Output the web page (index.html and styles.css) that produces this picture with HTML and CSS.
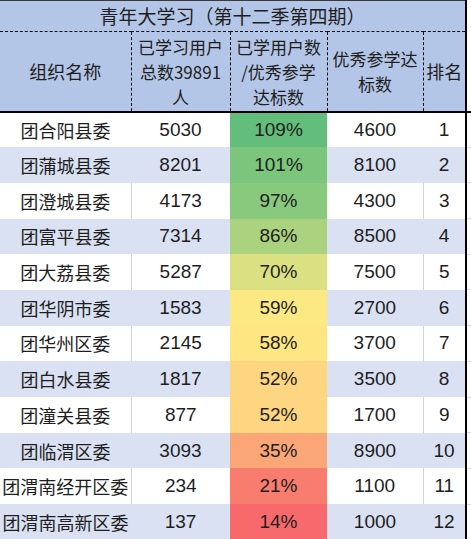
FILE: index.html
```html
<!DOCTYPE html>
<html lang="zh-CN">
<head>
  <meta charset="UTF-8" />
  <meta name="viewport" content="width=device-width, initial-scale=1.0" />
  <title>青年大学习（第十二季第四期）</title>
  <link rel="stylesheet" href="styles.css">
</head>
<body>

  <table class="tabla">
    <colgroup>
      <col class="col_nombre">
      <col class="col_total">
      <col class="col_tasa">
      <col class="col_meta">
      <col class="col_rango">
      <col class="col_hueco">
    </colgroup>
    <thead>
      <tr class="fila_titulo">
        <th colspan="5">青年大学习（第十二季第四期）</th>
        <td class="hueco"></td>
      </tr>
      <tr class="fila_cabecera">
        <th>组织名称</th>
        <th>已学习用户<br>总数39891<br>人</th>
        <th>已学用户数<br>/优秀参学<br>达标数</th>
        <th>优秀参学达<br>标数</th>
        <th>排名</th>
        <td class="hueco"></td>
      </tr>
    </thead>
    <tbody>
      <tr>
        <td class="nombre">团合阳县委</td>
        <td class="num">5030</td>
        <td class="num tasa" style="background:#63be7b">109%</td>
        <td class="num">4600</td>
        <td class="num">1</td>
        <td class="hueco"></td>
      </tr>
      <tr>
        <td class="nombre">团蒲城县委</td>
        <td class="num">8201</td>
        <td class="num tasa" style="background:#7cc57c">101%</td>
        <td class="num">8100</td>
        <td class="num">2</td>
        <td class="hueco"></td>
      </tr>
      <tr>
        <td class="nombre">团澄城县委</td>
        <td class="num">4173</td>
        <td class="num tasa" style="background:#88c97d">97%</td>
        <td class="num">4300</td>
        <td class="num">3</td>
        <td class="hueco"></td>
      </tr>
      <tr>
        <td class="nombre">团富平县委</td>
        <td class="num">7314</td>
        <td class="num tasa" style="background:#aad27f">86%</td>
        <td class="num">8500</td>
        <td class="num">4</td>
        <td class="hueco"></td>
      </tr>
      <tr>
        <td class="nombre">团大荔县委</td>
        <td class="num">5287</td>
        <td class="num tasa" style="background:#dbe182">70%</td>
        <td class="num">7500</td>
        <td class="num">5</td>
        <td class="hueco"></td>
      </tr>
      <tr>
        <td class="nombre">团华阴市委</td>
        <td class="num">1583</td>
        <td class="num tasa" style="background:#fde984">59%</td>
        <td class="num">2700</td>
        <td class="num">6</td>
        <td class="hueco"></td>
      </tr>
      <tr>
        <td class="nombre">团华州区委</td>
        <td class="num">2145</td>
        <td class="num tasa" style="background:#fee683">58%</td>
        <td class="num">3700</td>
        <td class="num">7</td>
        <td class="hueco"></td>
      </tr>
      <tr>
        <td class="nombre">团白水县委</td>
        <td class="num">1817</td>
        <td class="num tasa" style="background:#fed580">52%</td>
        <td class="num">3500</td>
        <td class="num">8</td>
        <td class="hueco"></td>
      </tr>
      <tr>
        <td class="nombre">团潼关县委</td>
        <td class="num">877</td>
        <td class="num tasa" style="background:#fed580">52%</td>
        <td class="num">1700</td>
        <td class="num">9</td>
        <td class="hueco"></td>
      </tr>
      <tr>
        <td class="nombre">团临渭区委</td>
        <td class="num">3093</td>
        <td class="num tasa" style="background:#fba677">35%</td>
        <td class="num">8900</td>
        <td class="num">10</td>
        <td class="hueco"></td>
      </tr>
      <tr>
        <td class="nombre">团渭南经开区委</td>
        <td class="num">234</td>
        <td class="num tasa" style="background:#f97d6f">21%</td>
        <td class="num">1100</td>
        <td class="num">11</td>
        <td class="hueco"></td>
      </tr>
      <tr>
        <td class="nombre">团渭南高新区委</td>
        <td class="num">137</td>
        <td class="num tasa" style="background:#f8696b">14%</td>
        <td class="num">1000</td>
        <td class="num">12</td>
        <td class="hueco"></td>
      </tr>
    </tbody>
  </table>

</body>
</html>
```

FILE: styles.css
```css
* {
  box-sizing: border-box;
}

body {
  margin: 0;
  padding: 0;
  background-color: #fff;
  color: #1e1e1e;
  font-family: "Noto Sans CJK SC", "Liberation Sans", sans-serif;
  overflow: hidden;
}

.tabla {
  width: 471px;
  border-collapse: collapse;
  table-layout: fixed;
}

.col_nombre { width: 131px; }
.col_total { width: 99px; }
.col_tasa { width: 97px; }
.col_meta { width: 96px; }
.col_rango { width: 43px; }
.col_hueco { width: 5px; }

th,
td {
  padding: 0;
  text-align: center;
  vertical-align: middle;
  white-space: nowrap;
}

.fila_titulo th {
  height: 31px;
  background-color: #b4c6e7;
  border-top: 1px solid #3a3a3a;
  border-bottom: 1px dashed #111;
  border-right: 2px solid #000;
  font-size: 19px;
  font-weight: normal;
  line-height: 28px;
}

.fila_cabecera th {
  height: 80px;
  background-color: #b4c6e7;
  border-left: 1px dashed #111;
  border-right: 1px dashed #111;
  border-bottom: 2px solid #000;
  font-size: 17px;
  font-weight: normal;
  line-height: 25px;
}

.fila_cabecera th:first-child {
  border-left: none;
  font-size: 18px;
}

.fila_cabecera th:nth-child(5) {
  border-right: 2px solid #000;
  font-size: 18px;
}

.fila_cabecera .hueco {
  border-bottom: 2px solid #000;
}

tbody td {
  height: 35.7px;
  line-height: 24px;
}

tbody tr:nth-child(even) td {
  background-color: #d9e1f2;
}

tbody tr:nth-child(odd):not(:first-child) td.nombre,
tbody tr:nth-child(odd):not(:first-child) td:nth-child(4) {
  border-right: 1px solid #d4d4d4;
}

tbody td:nth-child(5) {
  border-right: 2px solid #000;
}

tbody .hueco,
tbody tr:nth-child(even) td.hueco {
  background-color: #fff;
  border-bottom: 1px solid #dadada;
}

.nombre {
  font-size: 18px;
}

.num {
  font-family: "Liberation Sans", "Noto Sans CJK SC", sans-serif;
  font-size: 19px;
}
```
